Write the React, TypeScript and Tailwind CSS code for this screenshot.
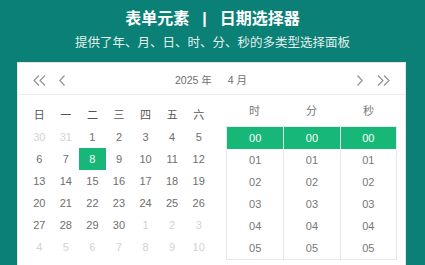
import React from 'react';

const FONT = { fontFamily: '"Liberation Sans", "Noto Sans CJK SC", sans-serif' };

const WEEK = ['日', '一', '二', '三', '四', '五', '六'];

// 6 rows of April 2025, with spill-over days from March / May
const DAYS: { n: number; muted: boolean }[] = [
  ...[30, 31].map(n => ({ n, muted: true })),
  ...Array.from({ length: 30 }, (_, i) => ({ n: i + 1, muted: false })),
  ...Array.from({ length: 10 }, (_, i) => ({ n: i + 1, muted: true })),
];

const TIME_COLS = ['时', '分', '秒'];
const TIME_ROWS = ['00', '01', '02', '03', '04', '05'];

function DoubleLeft() {
  return (
    <svg width="13" height="11" viewBox="0 0 13 11" fill="none">
      <path d="M6 0.5L1 5.5l5 5M12 0.5L7 5.5l5 5" stroke="#8f8f8f" strokeWidth="1.1" />
    </svg>
  );
}

function SingleLeft() {
  return (
    <svg width="6" height="11" viewBox="0 0 6 11" fill="none">
      <path d="M5.5 0.5L0.8 5.5l4.7 5" stroke="#8f8f8f" strokeWidth="1.1" />
    </svg>
  );
}

function SingleRight() {
  return (
    <svg width="6" height="11" viewBox="0 0 6 11" fill="none">
      <path d="M0.5 0.5l4.7 5-4.7 5" stroke="#8f8f8f" strokeWidth="1.1" />
    </svg>
  );
}

function DoubleRight() {
  return (
    <svg width="13" height="11" viewBox="0 0 13 11" fill="none">
      <path d="M1 0.5l5 5-5 5M7 0.5l5 5-5 5" stroke="#8f8f8f" strokeWidth="1.1" />
    </svg>
  );
}

export default function App() {
  return (
    <div className="w-[425px] h-[265px] bg-[#0a8077] overflow-hidden flex flex-col items-center" style={FONT}>
      {/* Title */}
      <div className="mt-[8px] h-[21px] flex items-center text-white text-[16px] font-bold leading-none">
        <span>表单元素</span>
        <span className="mx-[13px]">|</span>
        <span>日期选择器</span>
      </div>
      <div className="mt-[5px] h-[18px] flex items-center text-[12.5px] text-[#e3f0ee] leading-none">
        提供了年、月、日、时、分、秒的多类型选择面板
      </div>

      {/* Picker panel */}
      <div className="mt-[10px] w-[389px] flex-1 bg-white border border-[#e4e4e4] border-b-0 self-start ml-[17px]">
        {/* Nav */}
        <div className="h-[32px] border-b border-[#ececec] flex items-center px-[15px] pt-[4px] text-[10.5px] text-[#707070]">
          <DoubleLeft />
          <span className="ml-[13px]"><SingleLeft /></span>
          <div className="flex-1 flex justify-center items-center gap-[16px]">
            <span>2025 年</span>
            <span>4 月</span>
          </div>
          <SingleRight />
          <span className="ml-[14px]"><DoubleRight /></span>
        </div>

        {/* Body */}
        <div className="flex">
          {/* Calendar */}
          <div className="ml-[8px] w-[186px] pt-[9px] text-[11px]">
            <div className="grid grid-cols-7 h-[22px] items-center text-center text-[#555]">
              {WEEK.map(w => (
                <span key={w}>{w}</span>
              ))}
            </div>
            <div className="grid grid-cols-7">
              {DAYS.map((d, i) => {
                const sel = !d.muted && d.n === 8;
                return (
                  <div
                    key={i}
                    className={`h-[22px] flex items-center justify-center ${
                      sel ? 'bg-[#16b777] text-white' : d.muted ? 'text-[#d2d2d2]' : 'text-[#6e6e6e]'
                    }`}
                  >
                    {d.n}
                  </div>
                );
              })}
            </div>
          </div>

          {/* Time */}
          <div className="ml-[14px] w-[171px] text-[11px]">
            <div className="grid grid-cols-3 h-[31px] items-center pt-[2px] text-center text-[#777]">
              {TIME_COLS.map(c => (
                <span key={c}>{c}</span>
              ))}
            </div>
            <div className="grid grid-cols-3 border border-[#e8e8e8]">
              {TIME_COLS.map((c, ci) => (
                <div key={c} className={ci > 0 ? 'border-l border-[#e8e8e8]' : ''}>
                  {TIME_ROWS.map((r, ri) => (
                    <div
                      key={r}
                      className={`h-[22px] flex items-center justify-center ${
                        ri === 0 ? 'bg-[#16b777] text-white' : 'text-[#777]'
                      }`}
                    >
                      {r}
                    </div>
                  ))}
                </div>
              ))}
            </div>
          </div>
        </div>
      </div>
    </div>
  );
}
